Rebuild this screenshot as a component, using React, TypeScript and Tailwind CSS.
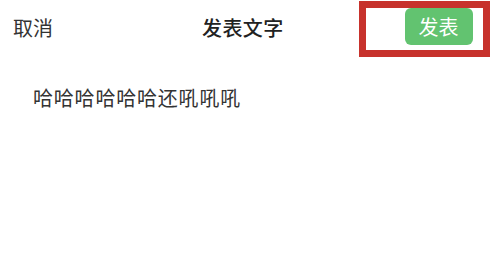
import React from "react";

export default function App() {
  const font = { fontFamily: '"Noto Sans CJK SC", "Noto Sans", sans-serif' };
  return (
    <div className="w-[497px] h-[275px] bg-white overflow-hidden" style={font}>
      <div className="flex items-start pt-[1px] h-[60px]">
        <div className="ml-[13px] mt-[13px] text-[20px] leading-[28px] text-[#333333]">取消</div>
        <div className="ml-[149px] mt-[13px] text-[20px] leading-[28px] tracking-[0.4px] font-medium text-[#222222]">发表文字</div>
        <div className="ml-[75px] w-[131px] h-[56px] border-[7px] border-[#c7322c] flex items-start justify-end pr-[10px]">
          <div className="w-[68px] h-[37px] rounded-[6px] bg-[#62c370] text-white text-[20px] leading-[37px] flex items-center justify-center">
            发表
          </div>
        </div>
      </div>
      <div className="ml-[33px] mt-[24px] text-[20px] leading-[28px] tracking-[0.8px] text-[#333333]">
        哈哈哈哈哈哈还吼吼吼
      </div>
    </div>
  );
}
